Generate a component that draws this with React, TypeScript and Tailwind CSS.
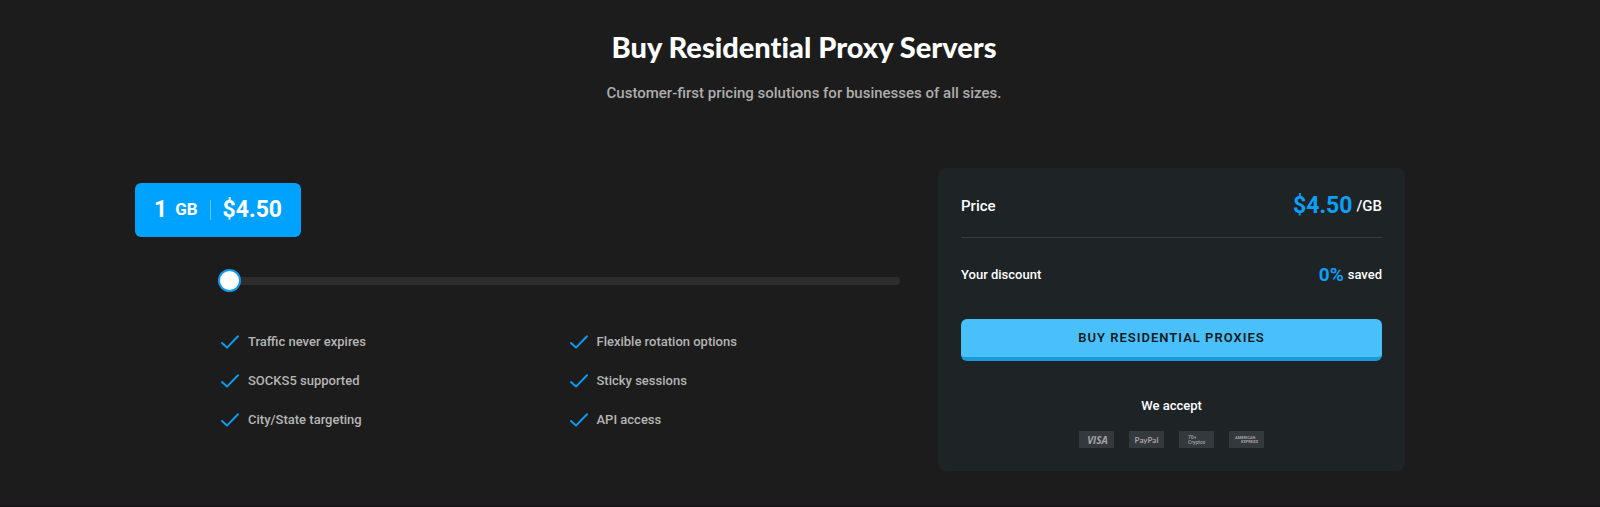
import { useState } from "react";

const features = [
  "Traffic never expires",
  "Flexible rotation options",
  "SOCKS5 supported",
  "Sticky sessions",
  "City/State targeting",
  "API access",
];

function CheckIcon() {
  return (
    <svg viewBox="0 0 18 14" className="h-[14px] w-[18px] shrink-0" fill="none" aria-hidden="true">
      <path d="M1 8 6 12.6 17 1.2" stroke="#1199ee" strokeWidth="2" strokeLinecap="round" strokeLinejoin="round" />
    </svg>
  );
}

function PaymentMethods() {
  const tile = "flex h-[17px] w-[35px] flex-col justify-center bg-[#34393d] text-[#a3a3a6]";
  return (
    <ul className="mt-[13px] flex justify-center gap-[15px]">
      <li className={tile + " items-center pl-[2px] font-['Open_Sans',sans-serif] text-[10px] leading-none font-bold italic"}>VISA</li>
      <li className={tile + " items-center font-[Lato,sans-serif] text-[8px] leading-none font-bold"}>PayPal</li>
      <li className={tile + " pl-[9px] text-[5px] leading-[5px] font-medium"}>
        <span>70+</span>
        <span>Cryptos</span>
      </li>
      <li className={tile + " px-[6px] text-[4px] leading-[4px] font-bold"}>
        <span>AMERICAN</span>
        <span className="text-right">EXPRESS</span>
      </li>
    </ul>
  );
}

export default function App() {
  const [gb, setGb] = useState(1);
  const rate = 4.5;

  return (
    <main className="min-h-screen border-b border-[#150f13] bg-[#1c1c1c] pb-8 pl-2 font-[Roboto,sans-serif] text-white">
      <header className="pt-[27px] text-center">
        <h2 className="font-[Lato,sans-serif] text-[29px] leading-10 font-black [font-variant-ligatures:none]">
          Buy Residential Proxy Servers
        </h2>
        <p className="mt-[14px] text-[15px] leading-6 font-medium text-[#adadad]">
          Customer-first pricing solutions for businesses of all sizes.
        </p>
      </header>

      <div className="mx-auto mt-[63px] flex max-w-[1202px] items-start">
        <section className="min-w-0 flex-1 pt-[15px] pr-[38px] pl-[15px]">
          <div className="flex w-0 justify-center">
            <output
              htmlFor="traffic"
              className="flex h-[54px] shrink-0 items-center rounded-md bg-[#00a2ff] px-[19px] font-bold whitespace-nowrap"
            >
              <span className="text-[23px]">{gb}</span>
              <span className="ml-2 text-[17px]">GB</span>
              <span className="mx-3 h-5 w-px bg-white/40" />
              <span className="text-[23px]">${(gb * rate).toFixed(2)}</span>
            </output>
          </div>

          <input
            id="traffic"
            type="range"
            min={1}
            max={1000}
            value={gb}
            aria-label="Traffic in GB"
            onChange={(e) => setGb(Number(e.target.value))}
            className="mt-8 block h-[23px] w-full cursor-pointer appearance-none bg-transparent [&::-webkit-slider-runnable-track]:h-2 [&::-webkit-slider-runnable-track]:rounded-full [&::-webkit-slider-runnable-track]:bg-[#2d2d2d] [&::-webkit-slider-thumb]:-mt-2 [&::-webkit-slider-thumb]:size-[23px] [&::-webkit-slider-thumb]:appearance-none [&::-webkit-slider-thumb]:rounded-full [&::-webkit-slider-thumb]:border-2 [&::-webkit-slider-thumb]:border-solid [&::-webkit-slider-thumb]:border-[#1199ee] [&::-webkit-slider-thumb]:bg-white"
          />

          <ul className="mt-[38px] mr-[-18px] ml-[3px] grid grid-cols-2 gap-y-[15px] text-[13px] leading-6 font-medium text-[#b5b5b5]">
            {features.map((feature) => (
              <li key={feature} className="flex items-center gap-[9px]">
                <CheckIcon />
                {feature}
              </li>
            ))}
          </ul>
        </section>

        <aside className="w-[467px] shrink-0 rounded-lg bg-[#1e2326] px-[23px] pt-5 pb-[23px]">
          <div className="flex items-center justify-between border-b border-[#383c40] pb-[13px] text-[15px] leading-9 font-medium">
            <span>Price</span>
            <span className="flex items-center gap-1">
              <strong className="text-[23px] font-bold text-[#0d9ff5]">$4.50</strong> /GB
            </span>
          </div>
          <div className="mt-[25px] flex items-center justify-between text-[13px] leading-6 font-medium">
            <span>Your discount</span>
            <span className="flex items-center gap-1">
              <strong className="text-[19px] font-bold text-[#0d9ff5]">0%</strong> saved
            </span>
          </div>
          <button
            type="button"
            className="mt-8 block h-[42px] w-full rounded-md border-b-4 border-[#1899dc] bg-[#4ac0fb] text-[13px] font-semibold tracking-[1px] text-[#101a20]"
          >
            BUY RESIDENTIAL PROXIES
          </button>
          <p className="mt-[33px] text-center text-[13px] leading-6 font-medium">We accept</p>
          <PaymentMethods />
        </aside>
      </div>
    </main>
  );
}
